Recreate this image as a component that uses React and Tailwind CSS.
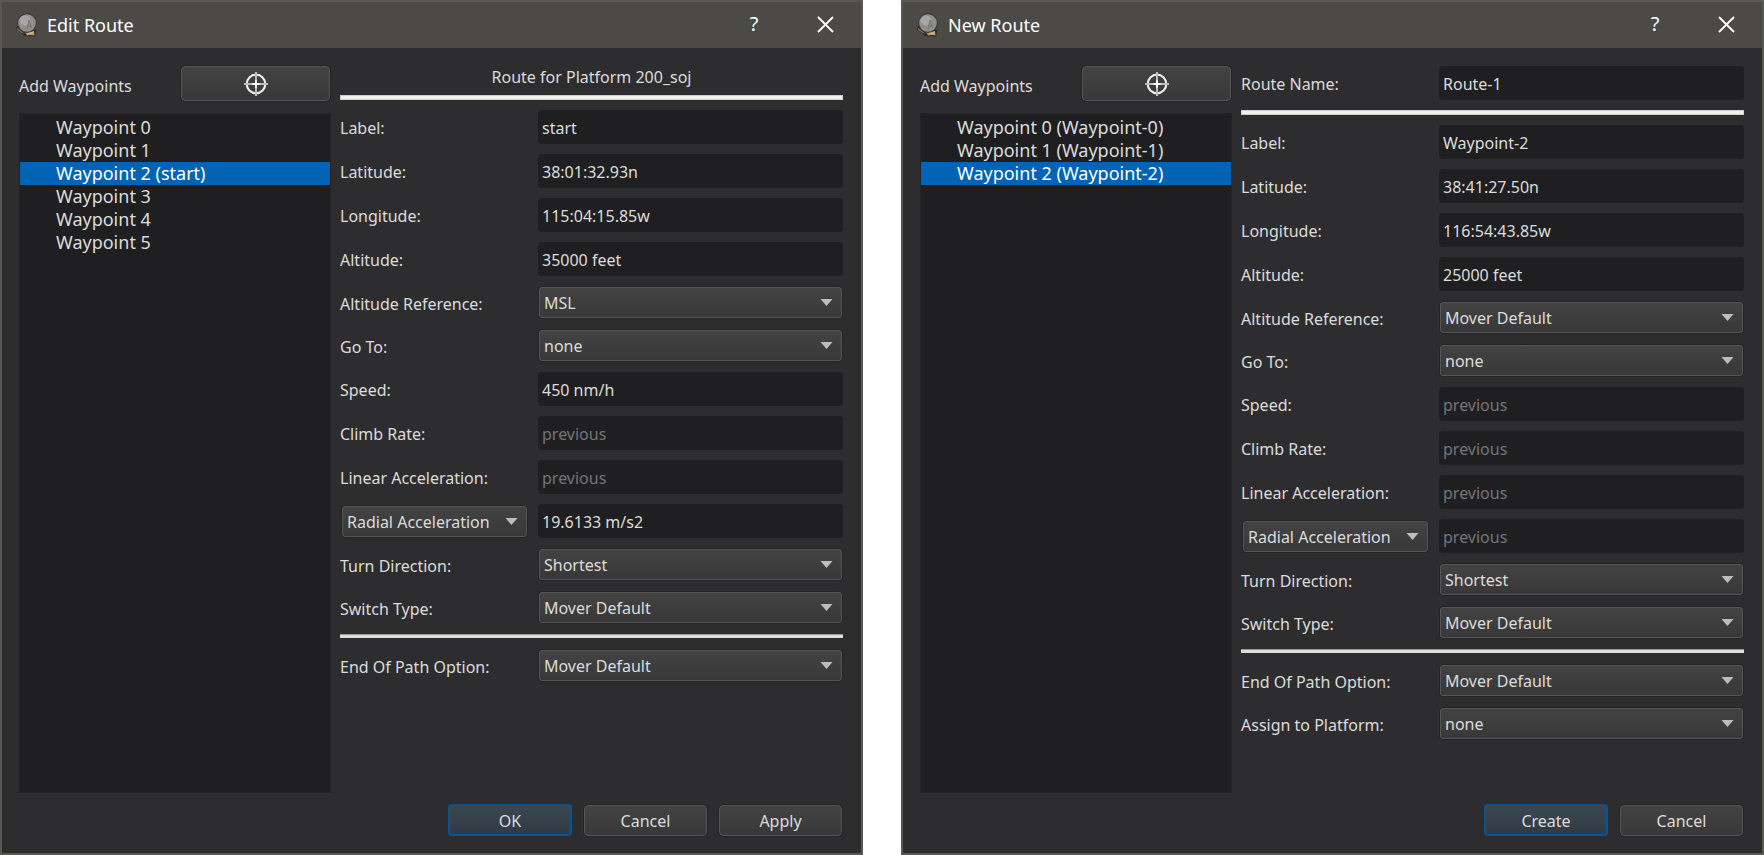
import React, { useId, useState } from "react";

const EDIT_ROUTE = {
  title: "Edit Route",
  heading: "Route for Platform 200_soj",
  waypoints: ["Waypoint 0", "Waypoint 1", "Waypoint 2 (start)", "Waypoint 3", "Waypoint 4", "Waypoint 5"],
  values: {
    label: "start",
    latitude: "38:01:32.93n",
    longitude: "115:04:15.85w",
    altitude: "35000 feet",
    altitudeReference: "MSL",
    speed: "450 nm/h",
    radial: "19.6133 m/s2",
  },
  buttons: ["OK", "Cancel", "Apply"],
};

const NEW_ROUTE = {
  title: "New Route",
  routeName: "Route-1",
  waypoints: ["Waypoint 0 (Waypoint-0)", "Waypoint 1 (Waypoint-1)", "Waypoint 2 (Waypoint-2)"],
  values: {
    label: "Waypoint-2",
    latitude: "38:41:27.50n",
    longitude: "116:54:43.85w",
    altitude: "25000 feet",
    altitudeReference: "Mover Default",
    speed: "",
    radial: "",
  },
  assignable: true,
  buttons: ["Create", "Cancel"],
};

// Radar dish on a brass base
function AppIcon() {
  return (
    <svg width="22" height="24" viewBox="0 0 22 24" aria-hidden="true">
      <path d="M1 13 L0 17 L4 19 L8 23 L19 23.5 L20.5 17 Z" fill="#2f2a24" />
      <path d="M1 15 L4 17 L9 21 L6 20 L1 17 Z" fill="#8a6f45" />
      <path d="M9 19 L18 18 L18.5 22.5 L14 22 L11 22.5 Z" fill="#b59a68" />
      <path d="M12 20h5" stroke="#e0cfa4" strokeWidth="1" />
      <circle cx="11" cy="10" r="10" fill="#3c3b39" />
      <circle cx="11" cy="10" r="8.8" fill="#8f8f8f" />
      <ellipse cx="9" cy="7.5" rx="5.5" ry="5" fill="#a6a6a6" />
      <path d="M13 7 L11 16 M13 7 L15.5 15 M11.5 13h4" stroke="#77736c" strokeWidth="1" fill="none" />
    </svg>
  );
}

function Crosshair() {
  return (
    <svg width="26" height="26" viewBox="0 0 26 26" fill="none" aria-hidden="true">
      <circle cx="13" cy="13" r="9.3" stroke="#ededed" strokeWidth="2.2" />
      <path d="M13 1v24M1 13h24" stroke="#bcbcbc" strokeWidth="2" />
      <path d="M13 9.5v7M9.5 13h7" stroke="#fff" strokeWidth="2" />
    </svg>
  );
}

function TextField({ id, value, ...rest }) {
  return (
    <input
      id={id}
      type="text"
      defaultValue={value}
      placeholder="previous"
      className="h-[34px] w-full min-w-0 rounded-[4px] bg-[#1f1f21] px-1 pt-[2px] text-[16px] text-[#dcdcdc] outline-none placeholder:text-[#757576]"
      {...rest}
    />
  );
}

function SelectField({ id, options, ...rest }) {
  return (
    <div className="relative w-full min-w-0 rounded-[4px] border border-[#242426]">
      <select
        id={id}
        className="block h-[31px] w-full appearance-none rounded-[3px] border border-[#565657] bg-linear-to-b from-[#434344] to-[#383839] px-1 pt-px text-[16px] text-[#dcdcdc] outline-none"
        {...rest}
      >
        {options.map((o) => (
          <option key={o}>{o}</option>
        ))}
      </select>
      <svg className="pointer-events-none absolute top-3 right-2" width="14" height="7" viewBox="0 0 14 7" aria-hidden="true">
        <path d="M0.5 0h12L6.5 7z" fill="#bdbdbd" />
      </svg>
    </div>
  );
}

function Row({ label, value, options }) {
  const id = useId();
  return (
    <div className="flex items-center gap-[10px]">
      <label htmlFor={id} className="w-[188px] shrink-0 pt-[2px]">
        {label}
      </label>
      {options ? <SelectField id={id} options={options} /> : <TextField id={id} value={value} />}
    </div>
  );
}

function PushButton({ primary, children }) {
  return (
    <button
      type="button"
      className={
        primary
          ? "h-8 w-[124px] rounded-[4px] border-2 border-[#0c5391] bg-linear-to-b from-[#3b4752] to-[#303a43] pt-px"
          : "h-[31px] w-[123px] rounded-[4px] border border-[#565657] bg-linear-to-b from-[#434344] to-[#383839] pt-px outline outline-[#242426]"
      }
    >
      {children}
    </button>
  );
}

function RouteDialog({ dialog }) {
  const [selected, setSelected] = useState(2);
  const v = dialog.values;

  return (
    <section className="flex min-h-screen flex-col border-2 border-[#585855] bg-[#2d2d2f] text-[16px] leading-5 text-[#dcdcdc]">
      {/* Title bar */}
      <header className="flex h-[46px] items-center bg-[#4b4a47] pl-[14px] text-white">
        <AppIcon />
        <h1 className="ml-[9px] flex-1 pb-px text-[18px]">{dialog.title}</h1>
        <button type="button" aria-label="Help" className="w-[70px] pb-[2px] text-[20px]">
          ?
        </button>
        <button type="button" aria-label="Close" className="flex w-[72px] justify-center pb-px">
          <svg width="17" height="17" viewBox="0 0 17 17" stroke="#fff" strokeWidth="1.8" aria-hidden="true">
            <path d="M1 1l15 15M16 1L1 16" />
          </svg>
        </button>
      </header>

      <div className="flex flex-1 gap-[9px] pt-[18px] pr-[18px] pl-[17px]">
        {/* Waypoint list */}
        <div className="flex w-[312px] shrink-0 flex-col gap-3">
          <div className="flex items-center justify-between">
            <span className="pt-1">Add Waypoints</span>
            <button
              type="button"
              aria-label="Add Waypoints"
              className="mr-px flex h-[35px] w-[149px] items-center justify-center rounded-[4px] border border-[#565657] bg-linear-to-b from-[#434344] to-[#383839] outline outline-[#242426]"
            >
              <Crosshair />
            </button>
          </div>
          <ul className="flex-1 border border-[#242426] bg-[#1f1f21] pt-[2px] text-[18px] leading-[23px]">
            {dialog.waypoints.map((w, i) => (
              <li key={w}>
                <button
                  type="button"
                  onClick={() => setSelected(i)}
                  className={`block w-full pl-9 text-left ${i === selected ? "bg-[#0063b3] text-white" : ""}`}
                >
                  {w}
                </button>
              </li>
            ))}
          </ul>
        </div>

        {/* Waypoint properties */}
        <form className="flex min-w-0 flex-1 flex-col gap-[10px]">
          {dialog.routeName ? (
            <Row label="Route Name:" value={dialog.routeName} />
          ) : (
            <h2 className="h-[19px] pt-px text-center">{dialog.heading}</h2>
          )}
          <hr className="h-[5px] border border-[#cfcfcd] bg-[#efefec]" />
          <Row label="Label:" value={v.label} />
          <Row label="Latitude:" value={v.latitude} />
          <Row label="Longitude:" value={v.longitude} />
          <Row label="Altitude:" value={v.altitude} />
          <Row label="Altitude Reference:" options={[v.altitudeReference, "AGL"]} />
          <Row label="Go To:" options={["none"]} />
          <Row label="Speed:" value={v.speed} />
          <Row label="Climb Rate:" value="" />
          <Row label="Linear Acceleration:" value="" />
          <div className="flex items-center gap-[10px]">
            <div className="w-[188px] shrink-0 pl-px">
              <SelectField options={["Radial Acceleration", "Bank Angle Limit"]} aria-label="Turn limit type" />
            </div>
            <TextField value={v.radial} aria-label="Radial Acceleration" />
          </div>
          <Row label="Turn Direction:" options={["Shortest", "Left", "Right"]} />
          <Row label="Switch Type:" options={["Mover Default", "Passing", "Approach"]} />
          <hr className="h-[5px] border-t border-b border-t-[#9a9a9a] border-b-[#2d2d2f] bg-[#dededc]" />
          <Row label="End Of Path Option:" options={["Mover Default", "Extrapolate", "Stop"]} />
          {dialog.assignable && <Row label="Assign to Platform:" options={["none"]} />}
        </form>
      </div>

      <footer className="flex items-center justify-end gap-[12px] pt-[11px] pr-[19px] pb-[17px]">
        {dialog.buttons.map((b, i) => (
          <PushButton key={b} primary={i === 0}>
            {b}
          </PushButton>
        ))}
      </footer>
    </section>
  );
}

export default function App() {
  return (
    <main className="grid grid-cols-2 gap-[38px] bg-white font-['Noto_Sans',sans-serif]">
      <RouteDialog dialog={EDIT_ROUTE} />
      <RouteDialog dialog={NEW_ROUTE} />
    </main>
  );
}
